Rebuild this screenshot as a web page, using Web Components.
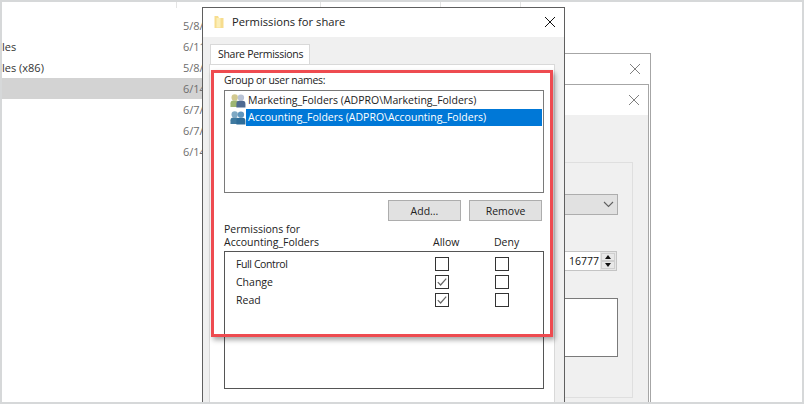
<!DOCTYPE html>
<html>
<head>
<meta charset="utf-8">
<title>Permissions for share</title>
<style>
	html, body{ margin: 0; height: 100%; background: #fff; }
	body{ font-family: "Open Sans", "Liberation Sans", sans-serif; font-size: 10.5px; color: #222; }
</style>
</head>
<body>

<desk-top>
	<file-list slot="list"></file-list>
	<back-dialog style="left:400px; top:51px; width:249px; --close-pad:9px;"></back-dialog>
	<back-dialog style="left:400px; top:82px; width:247px;" detail></back-dialog>
	<share-dialog></share-dialog>
</desk-top>

<script>
const CLOSE_ICON = `<svg width="12" height="12" viewBox="0 0 12 12"><path d="M1 1 L11 11 M11 1 L1 11" fill="none" stroke="currentColor" stroke-width="1"/></svg>`;

class DeskTop extends HTMLElement {
	constructor(){
		super();
		this.attachShadow({mode : 'open'}).innerHTML = `
			<style>
				:host{
					display: block;
					position: relative;
					box-sizing: border-box;
					width: 804px;
					height: 404px;
					border: 2px solid #d6d8d9;
					overflow: hidden;
					background: #fff;
				}
			</style>
			<slot name="list"></slot>
			<slot></slot>
		`;
	}
}

class FileList extends HTMLElement {
	connectedCallback(){
		const rows = [
			['', '5/8/'],
			['les', '6/11'],
			['les (x86)', '5/8/'],
			['', '6/14', true],
			['', '6/7/'],
			['', '6/7/'],
			['', '6/14']
		];
		const html = rows.map(r => `<div class="row ${r[2] ? 'sel' : ''}"><span>${r[0]}</span><span class="date">${r[1]}</span></div>`).join('');
		this.attachShadow({mode : 'open'}).innerHTML = `
			<style>
				:host{ display: block; color: #333; font-size: 11px; }
				.head{ display: flex; height: 13px; }
				.head div{ border-right: 1px solid #e4e4e4; height: 6px; }
				.row{ display: flex; width: 300px; height: 21px; line-height: 21px; }
				.row span:first-child{ width: 181px; flex: none; }
				.date{ color: #6d6d6d; }
				.sel{ background: #d3d3d3; }
			</style>
			<div class="head">
				<div style="width:174px"></div>
				<div style="width:143px"></div>
				<div style="width:119px"></div>
				<div style="width:79px"></div>
			</div>
			${html}
		`;
	}
}

// the two windows that lie behind the share dialog
class BackDialog extends HTMLElement {
	connectedCallback(){
		const detail = this.hasAttribute('detail') ? `
			<div class="body">
				<div class="group">
					<div class="drop"><svg width="11" height="7" viewBox="0 0 11 7"><path d="M1 1 L5.5 5.5 L10 1" fill="none" stroke="#606060" stroke-width="1.1"/></svg></div>
					<div class="spin">
						<div class="val">16777</div>
						<div class="arrows"><i class="up"></i><i class="down"></i></div>
					</div>
					<div class="white"></div>
				</div>
			</div>` : '';
		this.attachShadow({mode : 'open'}).innerHTML = `
			<style>
				:host{
					display: flex;
					flex-direction: column;
					position: absolute;
					box-sizing: border-box;
					height: 400px;
					background: #fff;
					border: 1px solid #a6a6a6;
				}
				.title{ height: 30px; flex: none; display: flex; justify-content: flex-end; align-items: center; padding-right: var(--close-pad, 8px); color: #808080; }
				.body{ flex: 1; background: #f0f0f0; padding: 47px 15px 0 0; }
				.group{ height: 236px; border: 1px solid #dfdfdf; border-left: none; display: flex; flex-direction: column; align-items: flex-end; padding: 31px 14px 0 0; box-sizing: border-box; }
				.drop{ box-sizing: border-box; width: 120px; height: 21px; background: #e1e1e1; border: 1px solid #adadad; display: flex; align-items: center; justify-content: flex-end; padding-right: 3px; }
				.spin{ box-sizing: border-box; width: 120px; height: 20px; margin: 36px 1px 0 0; display: flex; border: 1px solid #c4c4c4; border-left: none; background: #e6e6e6; }
				.val{ flex: 1; background: #fff; text-align: right; padding-right: 1px; line-height: 19px; color: #111; }
				.arrows{ width: 14px; flex: none; display: flex; flex-direction: column; padding: 1px; }
				.arrows i{ flex: 1; display: flex; align-items: center; justify-content: center; background: #e8e8e8; border: 1px solid #cfcfcf; }
				.arrows i::before{ content: ""; border-left: 3.5px solid transparent; border-right: 3.5px solid transparent; }
				.up::before{ border-bottom: 4px solid #111; }
				.down::before{ border-top: 4px solid #111; }
				.white{ box-sizing: border-box; width: 120px; height: 59px; margin-top: 27px; background: #fff; border: 1px solid #7a7a7a; }
			</style>
			<div class="title">${CLOSE_ICON}</div>
			${detail}
		`;
	}
}

class UserIcon extends HTMLElement {
	connectedCallback(){
		const mixed = this.getAttribute('kind') === 'mixed';
		const back = mixed ? ['#d2c98f', '#9db573'] : ['#7fa9c4', '#3f7aa0'];
		const front = mixed ? ['#b9c3d6', '#4e6a92'] : ['#5f96bd', '#2f6d99'];
		this.attachShadow({mode : 'open'}).innerHTML = `
			<style>
				:host{ display: block; width: 16px; height: 16px; flex: none; }
				svg{ display: block; }
			</style>
			<svg width="16" height="16" viewBox="0 0 17 16">
				<circle cx="5" cy="4.2" r="3.4" fill="${back[0]}"/>
				<path d="M0.5 14.5 V10.5 Q0.5 7.6 3.5 7.4 H6.5 Q9.5 7.6 9.5 10.5 V14.5 Z" fill="${back[1]}"/>
				<circle cx="11.6" cy="4.4" r="3.4" fill="${front[0]}"/>
				<path d="M6.8 15 V11 Q6.8 8 9.8 7.8 H13.4 Q16.4 8 16.4 11 V15 Z" fill="${front[1]}"/>
			</svg>
		`;
	}
}

class CheckBox extends HTMLElement {
	connectedCallback(){
		const tick = this.hasAttribute('checked')
			? `<svg width="12" height="12" viewBox="0 0 12 12"><path d="M1.8 6.2 L4.6 9 L10.2 2.6" fill="none" stroke="#666" stroke-width="1.2"/></svg>` : '';
		this.attachShadow({mode : 'open'}).innerHTML = `
			<style>
				:host{
					display: flex;
					align-items: center;
					justify-content: center;
					box-sizing: border-box;
					width: 14px;
					height: 14px;
					border: 1px solid #333;
					background: #fff;
				}
			</style>
			${tick}
		`;
	}
}

class PermRow extends HTMLElement {
	connectedCallback(){
		const allow = this.hasAttribute('allow') ? 'checked' : '';
		this.attachShadow({mode : 'open'}).innerHTML = `
			<style>
				:host{
					display: grid;
					grid-template-columns: 199px 60px 14px;
					height: 18px;
					padding-left: 11px;
					align-items: center;
				}
				span{ padding-bottom: 1px; }
			</style>
			<span><slot></slot></span>
			<check-box ${allow}></check-box>
			<check-box></check-box>
		`;
	}
}

class GroupRow extends HTMLElement {
	connectedCallback(){
		const sel = this.hasAttribute('selected');
		this.attachShadow({mode : 'open'}).innerHTML = `
			<style>
				:host{ display: flex; align-items: center; height: 17px; padding-left: 5px; }
				.name{ flex: 1; height: 17px; line-height: 16px; padding-left: 2px; margin-right: 1px; white-space: nowrap; }
				.sel{ background: #0078d7; color: #fff; }
			</style>
			<user-icon kind="${this.getAttribute('kind')}"></user-icon>
			<span class="name ${sel ? 'sel' : ''}"><slot></slot></span>
		`;
	}
}

class WinButton extends HTMLElement {
	constructor(){
		super();
		this.attachShadow({mode : 'open'}).innerHTML = `
			<style>
				:host{
					display: flex;
					align-items: center;
					justify-content: center;
					box-sizing: border-box;
					width: 73px;
					height: 21px;
					background: #e1e1e1;
					border: 1px solid #adadad;
				}
			</style>
			<slot></slot>
		`;
	}
}

class ShareDialog extends HTMLElement {
	constructor(){
		super();
		this.attachShadow({mode : 'open'}).innerHTML = `
			<style>
				:host{
					display: flex;
					flex-direction: column;
					position: absolute;
					left: 200px;
					top: 5px;
					width: 363px;
					height: 400px;
					box-sizing: border-box;
					border: 1px solid #5f5f5f;
					background: #f0f0f0;
				}
				.title{ flex: none; height: 29px; padding-bottom: 2px; box-sizing: border-box; background: #fff; display: flex; align-items: center; padding-left: 11px; padding-right: 8px; font-size: 11.2px; color: #222; }
				.title svg.folder{ margin-right: 8px; }
				.title .text{ flex: 1; }
				.close{ color: #111; display: flex; }
				.tabs{ flex: none; padding: 7px 0 0 7px; height: 20px; display: flex; }
				.tab{ width: 100px; height: 20px; box-sizing: border-box; background: #fff; border: 1px solid #d9d9d9; border-bottom: none; padding-left: 7px; line-height: 18px; white-space: nowrap; letter-spacing: -.3px; }
				.panel{ flex: 1; margin: 0 9px 0 6px; background: #fff; border: 1px solid #d9d9d9; padding: 8px 0 0 14px; }
				.label{ line-height: 14px; height: 14px; letter-spacing: -.3px; }
				.users{ box-sizing: border-box; width: 320px; height: 103px; margin-top: 3px; border: 1px solid #7a7a7a; padding-top: 1px; background: #fff; }
				.buttons{ display: flex; gap: 8px; width: 318px; justify-content: flex-end; margin-top: 7px; }
				.heading{ display: flex; width: 320px; align-items: flex-end; margin-top: 2px; height: 26px; line-height: 13px; }
				.heading .who{ width: 209px; }
				.heading .allow{ width: 61px; }
				.perms{ box-sizing: border-box; width: 320px; height: 138px; margin-top: 2px; border: 1px solid #555; padding-top: 3px; background: #fff; }
				.mark{ position: absolute; left: 8px; top: 62px; width: 342px; height: 267px; box-sizing: border-box; border: 3px solid #ee4b50; box-shadow: 2px 3px 5px rgba(0,0,0,.35); pointer-events: none; }
			</style>
			<div class="title">
				<svg class="folder" width="10" height="14" viewBox="0 0 10 14">
					<path d="M0.5 1 H4 L5 3 H9.5 V13 H0.5 Z" fill="#f7dd8e"/>
					<path d="M2.5 3 H6.5 V12.5 H2.5 Z" fill="#fbeeb8"/>
				</svg>
				<span class="text">Permissions for share</span>
				<span class="close">${CLOSE_ICON}</span>
			</div>
			<div class="tabs"><div class="tab">Share Permissions</div></div>
			<div class="panel">
				<div class="label">Group or user names:</div>
				<div class="users">
					<group-row kind="mixed">Marketing_Folders (ADPRO\\Marketing_Folders)</group-row>
					<group-row kind="blue" selected>Accounting_Folders (ADPRO\\Accounting_Folders)</group-row>
				</div>
				<div class="buttons">
					<win-button>Add...</win-button>
					<win-button>Remove</win-button>
				</div>
				<div class="heading">
					<div class="who">Permissions for<br>Accounting_Folders</div>
					<div class="allow">Allow</div>
					<div>Deny</div>
				</div>
				<div class="perms">
					<perm-row style="letter-spacing:-.4px">Full Control</perm-row>
					<perm-row allow>Change</perm-row>
					<perm-row allow>Read</perm-row>
				</div>
			</div>
			<div class="mark"></div>
		`;
	}
}

// children first, so connectedCallback of the inner rows sees them defined
customElements.define('user-icon', UserIcon);
customElements.define('check-box', CheckBox);
customElements.define('perm-row', PermRow);
customElements.define('group-row', GroupRow);
customElements.define('win-button', WinButton);
customElements.define('file-list', FileList);
customElements.define('back-dialog', BackDialog);
customElements.define('share-dialog', ShareDialog);
customElements.define('desk-top', DeskTop);
</script>
</body>
</html>
